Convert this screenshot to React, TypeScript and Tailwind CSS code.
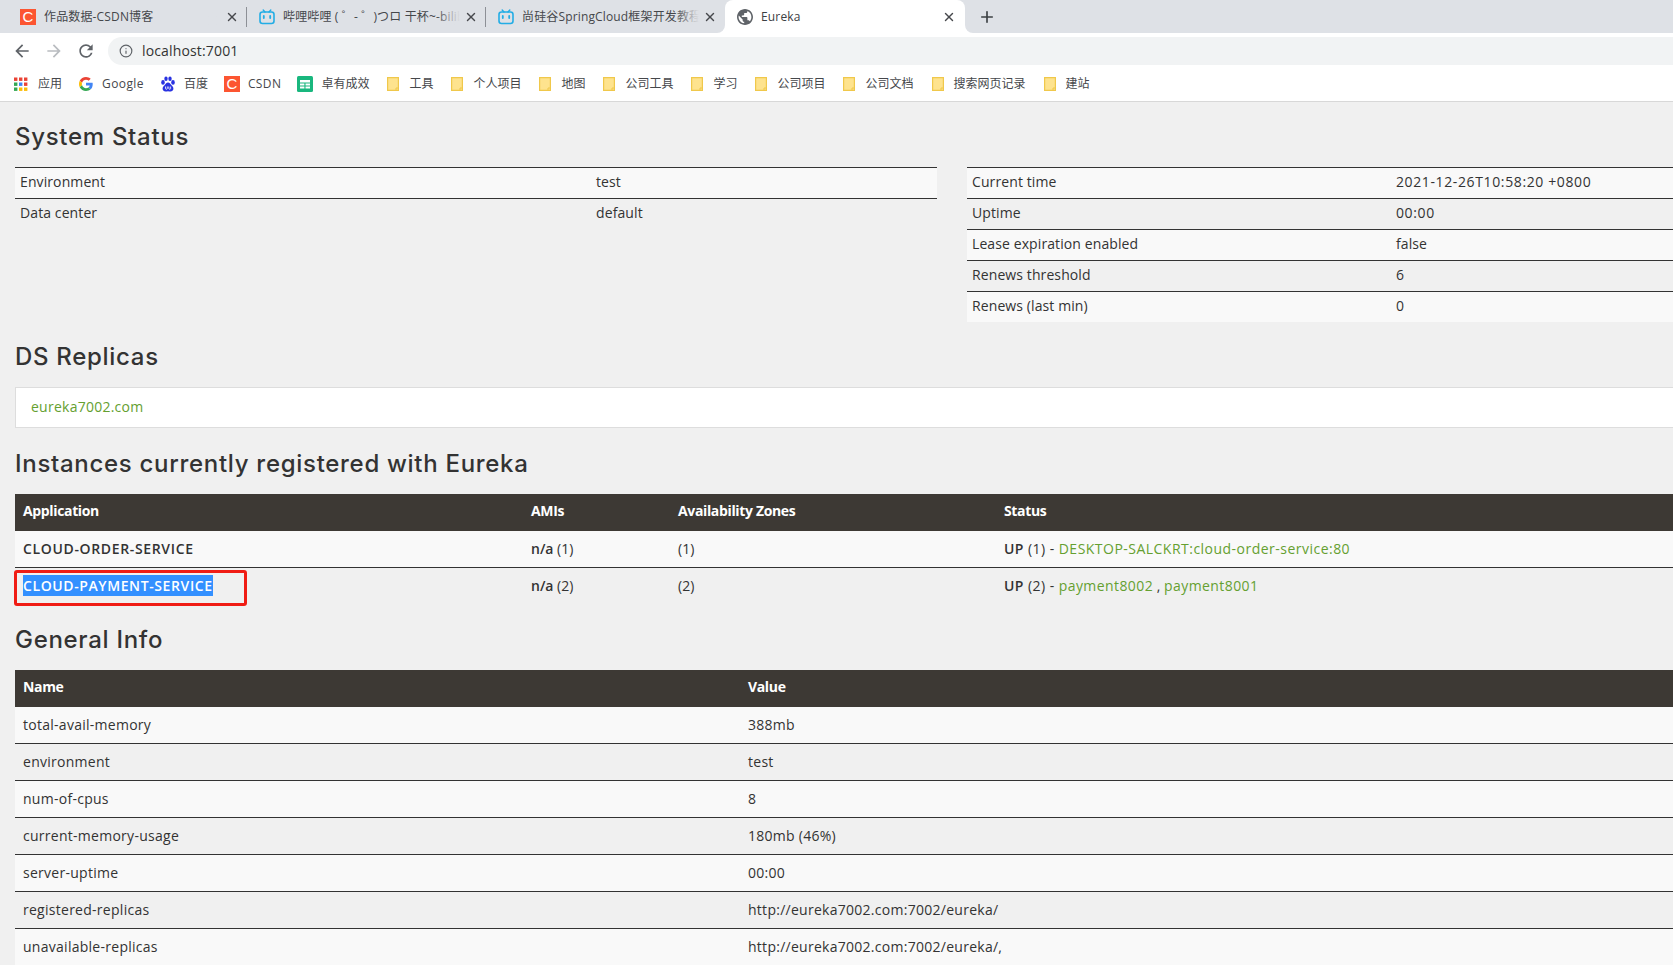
import React from "react";
import { Info, Plus, X } from "lucide-react";

function CsdnIcon() {
  return (
    <span className="flex h-4 w-4 shrink-0 items-center justify-center bg-[#fc5531] font-['Liberation_Sans',sans-serif] text-[15px] leading-none text-white">
      C
    </span>
  );
}

function BiliIcon() {
  return (
    <svg width="16" height="16" viewBox="0 0 16 16" className="shrink-0">
      <path d="M4.2 1 6 3M11.8 1 10 3" stroke="#23ade5" strokeWidth="1.4" strokeLinecap="round" />
      <rect x="1" y="3" width="14" height="11.5" rx="2.5" fill="none" stroke="#23ade5" strokeWidth="1.6" />
      <path d="M4.8 7v2M11.2 7v2" stroke="#23ade5" strokeWidth="1.8" strokeLinecap="round" />
    </svg>
  );
}

function GlobeIcon() {
  return (
    <svg width="16" height="16" viewBox="2 2 20 20" fill="#5f6368" className="shrink-0">
      <path d="M12 2C6.48 2 2 6.48 2 12s4.48 10 10 10 10-4.48 10-10S17.52 2 12 2zm-1 17.93c-3.95-.49-7-3.85-7-7.93 0-.62.08-1.21.21-1.79L9 15v1c0 1.1.9 2 2 2v1.93zm6.9-2.54c-.26-.81-1-1.39-1.9-1.39h-1v-3c0-.55-.45-1-1-1H8v-2h2c.55 0 1-.45 1-1V7h2c1.1 0 2-.9 2-2v-.41c2.93 1.19 5 4.06 5 7.41 0 2.08-.8 3.97-2.1 5.39z" />
    </svg>
  );
}

function AppsIcon() {
  const colors = ["#ea4335", "#ea4335", "#ea4335", "#34a853", "#4285f4", "#ea4335", "#34a853", "#fbbc05", "#fbbc05"];
  return (
    <svg width="16" height="16" viewBox="0 0 16 16" className="shrink-0">
      {colors.map((c, i) => (
        <rect key={i} x={(i % 3) * 5} y={1.5 + Math.floor(i / 3) * 5} width="3.4" height="3.4" fill={c} />
      ))}
    </svg>
  );
}

function GoogleIcon() {
  return (
    <svg width="14" height="14" viewBox="0 0 48 48" className="mx-px shrink-0">
      <path fill="#EA4335" d="M24 9.5c3.54 0 6.71 1.22 9.21 3.6l6.85-6.85C35.9 2.38 30.47 0 24 0 14.62 0 6.51 5.38 2.56 13.22l7.98 6.19C12.43 13.72 17.74 9.5 24 9.5z" />
      <path fill="#4285F4" d="M46.98 24.55c0-1.57-.15-3.09-.38-4.55H24v9.02h12.94c-.58 2.96-2.26 5.48-4.78 7.18l7.73 6c4.51-4.18 7.09-10.36 7.09-17.65z" />
      <path fill="#FBBC05" d="M10.53 28.59c-.48-1.45-.76-2.99-.76-4.59s.27-3.14.76-4.59l-7.98-6.19C.92 16.46 0 20.12 0 24c0 3.88.92 7.54 2.56 10.78l7.97-6.19z" />
      <path fill="#34A853" d="M24 48c6.48 0 11.93-2.13 15.89-5.81l-7.73-6c-2.15 1.45-4.92 2.3-8.16 2.3-6.26 0-11.57-4.22-13.47-9.91l-7.98 6.19C6.51 42.62 14.62 48 24 48z" />
    </svg>
  );
}

function BaiduIcon() {
  return (
    <svg width="16" height="16" viewBox="0 0 16 16" fill="#2932e1" className="shrink-0">
      <ellipse cx="3" cy="6.4" rx="1.8" ry="2.3" />
      <ellipse cx="6" cy="2.8" rx="1.7" ry="2.3" />
      <ellipse cx="10" cy="2.8" rx="1.7" ry="2.3" />
      <ellipse cx="13" cy="6.4" rx="1.8" ry="2.3" />
      <path d="M8 6.6c-1.6 0-2.2 1.3-3.2 2.4C3.6 10 2.4 11 2.6 13c.2 1.7 1.6 2.6 3 2.5 1 0 1.600-.3 2.400-.3s1.400.3 2.400.3c1.400.1 2.800-.8 3-2.500.2-2-1-3-2.200-4C10.200 7.900 9.600 6.600 8 6.600z" />
      <path d="M5.500 10.500v2c0 1 1.800 1 1.800 0v-2M8.800 10.500v2c0 1 1.800 1 1.800 0v-2" fill="none" stroke="#fff" strokeWidth="0.8" />
    </svg>
  );
}

function SheetIcon() {
  return (
    <svg width="16" height="16" viewBox="0 0 16 16" className="shrink-0">
      <rect width="16" height="16" rx="1.5" fill="#19b77e" />
      <path d="M3 4h10v2.400H3zM3 7.400h4.400v2H3zM8.500 7.400H13v2H8.500zM3 10.400h4.400v2H3zM8.500 10.400H13v2H8.500z" fill="#fff" />
    </svg>
  );
}

function FolderIcon() {
  return (
    <svg width="12" height="14" viewBox="0 0 12 14" className="mx-[2px] shrink-0">
      <path d="M.6.6h10.800v12.800H.6z" fill="#fee38e" stroke="#f0c84b" strokeWidth="1.200" />
      <path d="M9 13.400v-2.400h2.400" fill="none" stroke="#f0c84b" strokeWidth="1" />
    </svg>
  );
}

const tabs = [
  { title: "作品数据-CSDN博客", icon: <CsdnIcon /> },
  { title: "哔哩哔哩 ( ゜- ゜)つロ 干杯~-bilibili", icon: <BiliIcon /> },
  { title: "尚硅谷SpringCloud框架开发教程", icon: <BiliIcon /> },
];

const bookmarks: { label: string; icon: React.ReactNode; latin?: boolean }[] = [
  { label: "应用", icon: <AppsIcon /> },
  { label: "Google", icon: <GoogleIcon />, latin: true },
  { label: "百度", icon: <BaiduIcon /> },
  { label: "CSDN", icon: <CsdnIcon />, latin: true },
  { label: "卓有成效", icon: <SheetIcon /> },
  { label: "工具", icon: <FolderIcon /> },
  { label: "个人项目", icon: <FolderIcon /> },
  { label: "地图", icon: <FolderIcon /> },
  { label: "公司工具", icon: <FolderIcon /> },
  { label: "学习", icon: <FolderIcon /> },
  { label: "公司项目", icon: <FolderIcon /> },
  { label: "公司文档", icon: <FolderIcon /> },
  { label: "搜索网页记录", icon: <FolderIcon /> },
  { label: "建站", icon: <FolderIcon /> },
];

function TabBar() {
  return (
    <div className="flex h-[33px] items-stretch bg-[#dee1e6] pl-2 text-xs tracking-[0.15px] text-[#45474b]">
      {tabs.map((tab, i) => (
        <div key={i} className="relative flex w-[239px] items-center pl-3 pr-2">
          {tab.icon}
          <div className="relative ml-2 min-w-0 flex-1 overflow-hidden whitespace-nowrap">
            {tab.title}
            <div className="absolute inset-y-0 right-0 w-6 bg-gradient-to-r from-transparent to-[#dee1e6]" />
          </div>
          <X size={14} strokeWidth={2.4} className="ml-1 shrink-0 text-[#46484c]" />
          {i < 2 && <div className="absolute right-0 top-[7px] h-[20px] w-px bg-[#8d9096]" />}
        </div>
      ))}
      <div className="relative flex w-[240px] items-center rounded-t-lg bg-white pl-3 pr-[9px] text-[#3c4043]">
        <GlobeIcon />
        <span className="ml-2 flex-1 whitespace-nowrap">Eureka</span>
        <X size={14} strokeWidth={2.4} className="text-[#46484c]" />
        <div className="absolute bottom-0 left-[-8px] h-2 w-2 bg-white">
          <div className="h-2 w-2 rounded-br-lg bg-[#dee1e6]" />
        </div>
        <div className="absolute bottom-0 right-[-8px] h-2 w-2 bg-white">
          <div className="h-2 w-2 rounded-bl-lg bg-[#dee1e6]" />
        </div>
      </div>
      <div className="flex w-[44px] items-center justify-center">
        <Plus size={18} strokeWidth={2.2} className="text-[#3c4043]" />
      </div>
    </div>
  );
}

function Toolbar() {
  return (
    <div className="flex h-[32px] items-center bg-white pl-3 pt-1">
      <svg width="20" height="20" viewBox="0 0 24 24" fill="#5f6368">
        <path d="M20 11H7.830l5.590-5.590L12 4l-8 8 8 8 1.410-1.410L7.830 13H20v-2z" />
      </svg>
      <svg width="20" height="20" viewBox="0 0 24 24" fill="#b9bcc0" className="ml-3">
        <path d="M4 11h12.170l-5.590-5.590L12 4l8 8-8 8-1.410-1.410L16.170 13H4v-2z" />
      </svg>
      <svg width="20" height="20" viewBox="0 0 24 24" fill="#5f6368" className="ml-3">
        <path d="M17.650 6.350A7.958 7.958 0 0 0 12 4c-4.420 0-7.990 3.580-7.990 8s3.570 8 7.990 8c3.730 0 6.840-2.550 7.730-6h-2.080A5.990 5.990 0 0 1 12 18c-3.310 0-6-2.690-6-6s2.690-6 6-6c1.660 0 3.140.690 4.220 1.780L13 11h7V4l-2.350 2.350z" />
      </svg>
      <div className="ml-3 flex h-[28px] flex-1 items-center rounded-l-full bg-[#f1f3f4] pl-[11px] text-sm tracking-[0.15px] text-[#333]">
        <Info size={14} strokeWidth={2} className="text-[#5f6368]" />
        <span className="ml-[9px]">localhost:7001</span>
      </div>
    </div>
  );
}

function BookmarkBar() {
  return (
    <div className="flex h-[37px] items-center gap-4 border-b border-[#d8d8d8] bg-white pl-[14px] pt-px text-xs text-[#45474b]">
      {bookmarks.map((b) => (
        <div key={b.label} className="flex items-center gap-2">
          {b.icon}
          <span className={`whitespace-nowrap ${b.latin ? "tracking-[0.4px]" : ""}`}>{b.label}</span>
        </div>
      ))}
    </div>
  );
}

const heading = "font-['Inter',sans-serif] text-2xl leading-[26px] font-medium tracking-[0.7px] text-[#333]";
const link = "text-[#65a030]";
const appLink = "tracking-[0.42px] text-[#65a030]";
const headerRow = "h-[37px] bg-[#3d3934] text-left font-semibold tracking-[-0.35px] text-white";

function StatusTable({ rows, first, className }: { rows: string[][]; first: string; className: string }) {
  return (
    <table className={`table-fixed border-t border-[#333] tracking-[0.1px] ${className}`}>
      <colgroup>
        <col className={first} />
        <col />
      </colgroup>
      <tbody>
        {rows.map((r, i) => {
          const last = i === rows.length - 1;
          const cell = `px-[5px] pb-[2px] ${last ? "h-[30px]" : "h-[31px] border-b border-[#333]"}`;
          return (
            <tr key={r[0]} className={i % 2 === 0 ? "bg-[#f9f9f9]" : ""}>
              <td className={cell}>{r[0]}</td>
              <td className={cell}>
                <span className={/\d/.test(r[1]) ? "tracking-[0.62px]" : ""}>{r[1]}</span>
              </td>
            </tr>
          );
        })}
      </tbody>
    </table>
  );
}

const generalRows = [
  ["total-avail-memory", "388mb"],
  ["environment", "test"],
  ["num-of-cpus", "8"],
  ["current-memory-usage", "180mb (46%)"],
  ["server-uptime", "00:00"],
  ["registered-replicas", "http://eureka7002.com:7002/eureka/"],
  ["unavailable-replicas", "http://eureka7002.com:7002/eureka/,"],
];

export default function App() {
  return (
    <div className="h-[965px] w-[1673px] overflow-hidden bg-[#f0f0f0] font-['Open_Sans','Noto_Sans_CJK_SC',sans-serif]">
      <TabBar />
      <Toolbar />
      <BookmarkBar />

      <main className="w-[1700px] pl-[15px] text-sm text-[#333]">
        <h2 className={`${heading} mt-[22px] mb-[17px]`}>System Status</h2>
        <div className="flex items-start gap-[30px]">
          <StatusTable
            className="w-[922px]"
            first="w-[576px]"
            rows={[
              ["Environment", "test"],
              ["Data center", "default"],
            ]}
          />
          <StatusTable
            className="flex-1"
            first="w-[424px]"
            rows={[
              ["Current time", "2021-12-26T10:58:20 +0800"],
              ["Uptime", "00:00"],
              ["Lease expiration enabled", "false"],
              ["Renews threshold", "6"],
              ["Renews (last min)", "0"],
            ]}
          />
        </div>

        <h2 className={`${heading} mt-[22px] mb-[17px]`}>DS Replicas</h2>
        <div className="flex h-[41px] items-center border border-[#ddd] bg-white pl-[15px] tracking-[0.25px]">
          <span className={link}>eureka7002.com</span>
        </div>

        <h2 className={`${heading} mt-[23px] mb-[17px]`}>Instances currently registered with Eureka</h2>
        <table className="w-full table-fixed">
          <colgroup>
            <col className="w-[508px]" />
            <col className="w-[147px]" />
            <col className="w-[326px]" />
            <col />
          </colgroup>
          <thead>
            <tr className={headerRow}>
              <th className="px-2 pb-[2px]">Application</th>
              <th className="px-2 pb-[2px]">AMIs</th>
              <th className="px-2 pb-[2px]">Availability Zones</th>
              <th className="px-2 pb-[2px]">Status</th>
            </tr>
          </thead>
          <tbody>
            <tr className="h-[37px] border-b border-[#333] bg-[#f9f9f9]">
              <td className="px-2 font-semibold tracking-[0.65px]">CLOUD-ORDER-SERVICE</td>
              <td className="px-2">
                <b className="font-semibold">n/a</b> (1)
              </td>
              <td className="px-2">(1)</td>
              <td className="px-2 tracking-[0.45px]">
                <b className="font-semibold">UP</b> (1) - <span className="tracking-[0.48px] text-[#65a030]">DESKTOP-SALCKRT:cloud-order-service:80</span>
              </td>
            </tr>
            <tr className="h-[37px]">
              <td className="relative px-2 font-semibold tracking-[0.6px]">
                <span className="bg-[#3390ff] py-[1px] text-white">CLOUD-PAYMENT-SERVICE</span>
                <div className="absolute top-[2px] left-[-1px] h-[36px] w-[233px] rounded-[3px] border-[3px] border-[#f01c14]" />
              </td>
              <td className="px-2">
                <b className="font-semibold">n/a</b> (2)
              </td>
              <td className="px-2">(2)</td>
              <td className="px-2 tracking-[0.45px]">
                <b className="font-semibold">UP</b> (2) - <span className={appLink}>payment8002</span>
                <span className="tracking-normal"> , </span>
                <span className={appLink}>payment8001</span>
              </td>
            </tr>
          </tbody>
        </table>

        <h2 className={`${heading} mt-[22px] mb-[17px]`}>General Info</h2>
        <table className="w-full table-fixed">
          <colgroup>
            <col className="w-[725px]" />
            <col />
          </colgroup>
          <thead>
            <tr className={headerRow}>
              <th className="px-2 pb-[2px]">Name</th>
              <th className="px-2 pb-[2px]">Value</th>
            </tr>
          </thead>
          <tbody>
            {generalRows.map((r, i) => (
              <tr key={r[0]} className={`h-[37px] border-b border-[#333] tracking-[0.27px] ${i % 2 === 0 ? "bg-[#f9f9f9]" : ""}`}>
                <td className="px-2">{r[0]}</td>
                <td className="px-2">{r[1]}</td>
              </tr>
            ))}
          </tbody>
        </table>
      </main>
    </div>
  );
}
